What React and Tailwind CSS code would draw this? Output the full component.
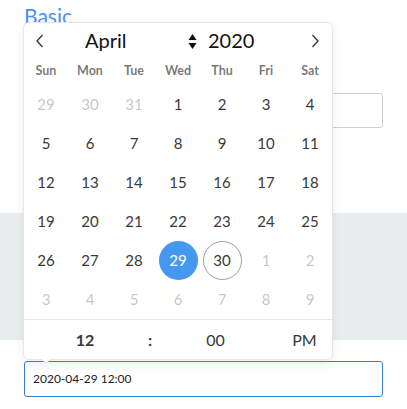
import React from "react";

const weekdays = ["Sun", "Mon", "Tue", "Wed", "Thu", "Fri", "Sat"];
const days = [
  [29, "p"], [30, "p"], [31, "p"], [1], [2], [3], [4],
  [5], [6], [7], [8], [9], [10], [11],
  [12], [13], [14], [15], [16], [17], [18],
  [19], [20], [21], [22], [23], [24], [25],
  [26], [27], [28], [29, "s"], [30, "t"], [1, "p"], [2, "p"],
  [3, "p"], [4, "p"], [5, "p"], [6, "p"], [7, "p"], [8, "p"], [9, "p"],
];

function Day({ n, k }) {
  let cls = "text-[#393939]";
  if (k === "p") cls = "text-[#393939]/30";
  if (k === "s") cls = "bg-[#4598f0] text-white";
  if (k === "t") cls = "border border-[#959ea9] text-[#393939]";
  return (
    <div className="flex h-[39px] items-center justify-center">
      <div className={"flex h-[39px] w-[39px] items-center justify-center rounded-full text-[15px] " + cls}>
        {n}
      </div>
    </div>
  );
}

export default function App() {
  return (
    <div className="relative h-[409px] w-[407px] overflow-hidden bg-white font-['Lato',sans-serif]">
      <div className="px-[24px] pt-[2px] text-[21px] leading-[28px] text-[#4d90f4]">Basic</div>
      <div className="mx-[24px] mt-[63px] h-[35px] rounded-[3px] border border-[#cfcfcf]"></div>
      <div className="mt-[85px] h-[127px] bg-[#e9eded]"></div>
      <div className="mx-[24px] mt-[21px] flex h-[36px] items-center rounded-[3px] border border-[#3a7dd4] px-[8px] text-[12px] text-[#222]">
        2020-04-29 12:00
      </div>

      <div className="absolute left-[24px] top-[23px] w-[308px] rounded-[5px] bg-white shadow-[1px_0_0_#e6e6e6,-1px_0_0_#e6e6e6,0_1px_0_#e6e6e6,0_-1px_0_#e6e6e6,0_3px_13px_rgba(0,0,0,0.08)]">
        <div className="relative flex h-[34px] items-center text-[#111]">
          <svg className="absolute left-[11px] top-[11px]" width="10" height="14" viewBox="0 0 10 14" fill="none" stroke="#333" strokeWidth="1.3">
            <path d="M7.5 1 L2 7 L7.5 13" />
          </svg>
          <div className="absolute left-[61px] top-[5px] text-[20px] leading-[24px]">April</div>
          <svg className="absolute left-[164px] top-[10px]" width="9" height="17" viewBox="0 0 9 17" fill="#111">
            <path d="M0.5 7 L4.5 1 L8.5 7 Z" />
            <path d="M0.5 10 L4.5 16 L8.5 10 Z" />
          </svg>
          <div className="absolute left-[184px] top-[5px] text-[20px] leading-[24px]">2020</div>
          <svg className="absolute left-[286px] top-[11px]" width="10" height="14" viewBox="0 0 10 14" fill="none" stroke="#333" strokeWidth="1.3">
            <path d="M2.5 1 L8 7 L2.5 13" />
          </svg>
        </div>
        <div className="grid h-[28px] grid-cols-7 items-center">
          {weekdays.map((w) => (
            <div key={w} className="text-center text-[12.5px] font-bold text-black/55">{w}</div>
          ))}
        </div>
        <div className="grid grid-cols-7">
          {days.map(([n, k], i) => (
            <Day key={i} n={n} k={k} />
          ))}
        </div>
        <div className="flex h-[40px] items-center border-t border-[#e6e6e6] text-[16px] text-[#393939]">
          <div className="w-[122px] text-center font-bold">12</div>
          <div className="w-[8px] text-center font-bold">:</div>
          <div className="w-[123px] text-center">00</div>
          <div className="flex-1 text-center">PM</div>
        </div>
        <div className="absolute bottom-[-5px] left-[17px] h-0 w-0 border-x-[5px] border-t-[5px] border-x-transparent border-t-[#e6e6e6]"></div>
        <div className="absolute bottom-[-4px] left-[18px] h-0 w-0 border-x-[4px] border-t-[4px] border-x-transparent border-t-white"></div>
      </div>
    </div>
  );
}
